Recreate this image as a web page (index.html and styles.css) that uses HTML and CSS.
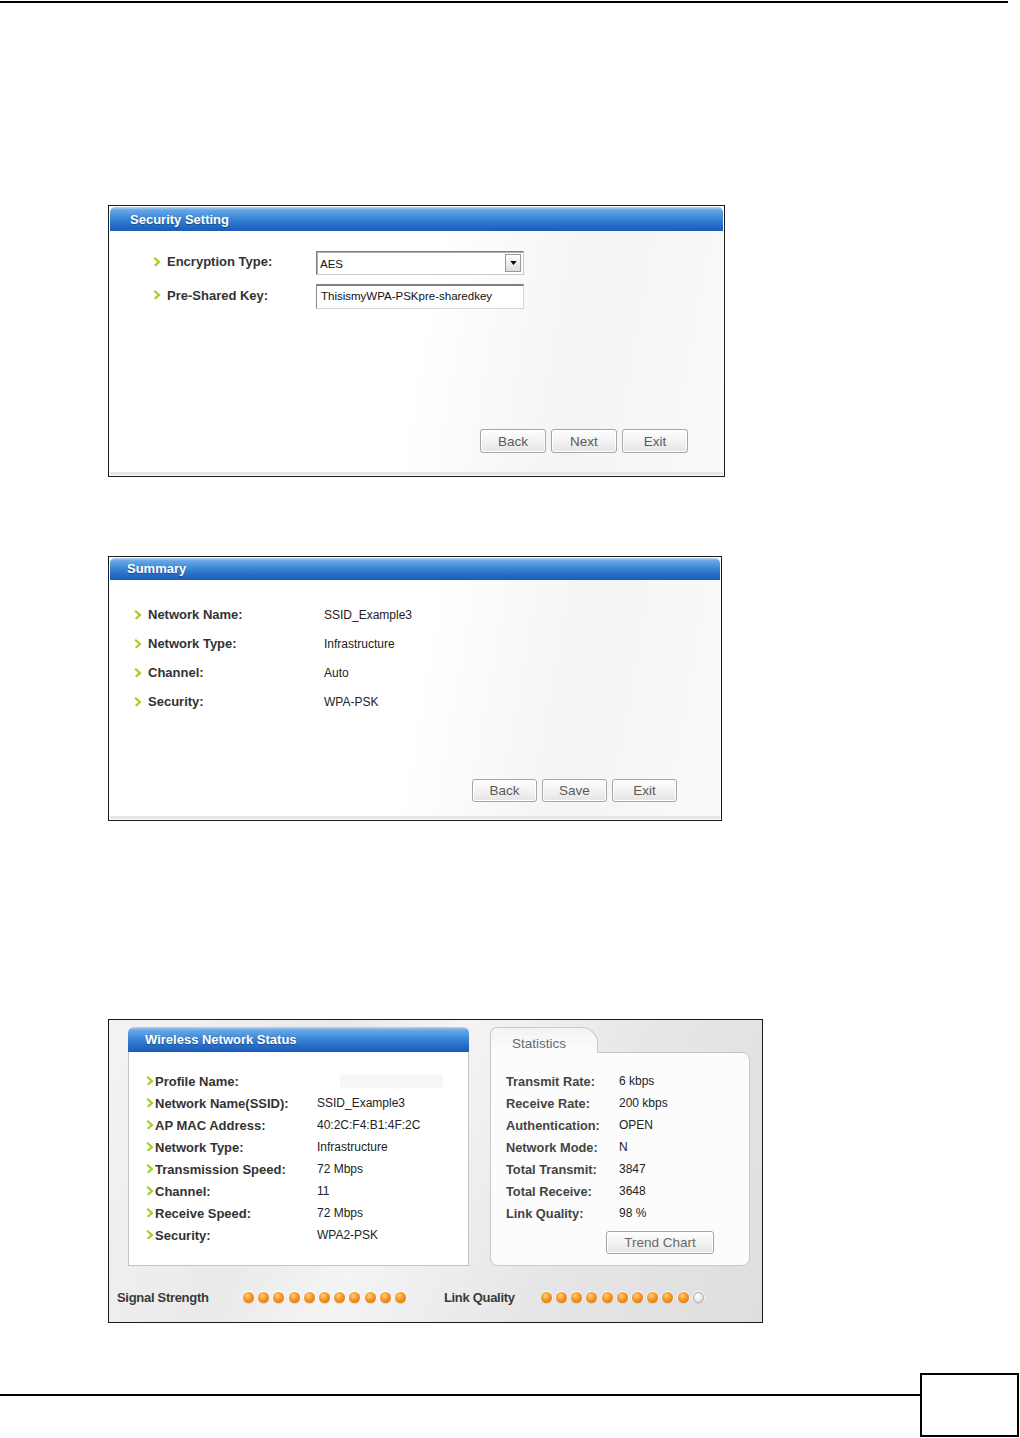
FILE: index.html
```html
<!DOCTYPE html>
<html>
<head>
<meta charset="utf-8">
<link rel="stylesheet" href="styles.css">
</head>
<body>
<div class="topline"></div>

<section class="panel panel-sec">
  <div class="ph">Security Setting</div>
  <div class="pb">
    <div class="form">
      <div class="frow">
        <span class="lbl"><svg class="chev" viewBox="0 0 8 10"><path d="M2 1.5 L6 5 L2 8.5" /></svg>Encryption Type:</span>
        <div class="select"><span class="sel-text">AES</span><span class="dd"><svg viewBox="0 0 8 5"><polygon points="0,0 8,0 4,5"/></svg></span></div>
      </div>
      <div class="frow">
        <span class="lbl"><svg class="chev" viewBox="0 0 8 10"><path d="M2 1.5 L6 5 L2 8.5" /></svg>Pre-Shared Key:</span>
        <div class="input">ThisismyWPA-PSKpre-sharedkey</div>
      </div>
    </div>
    <div class="btns">
      <span class="btn">Back</span><span class="btn">Next</span><span class="btn">Exit</span>
    </div>
  </div>
</section>

<section class="panel panel-sum">
  <div class="ph">Summary</div>
  <div class="pb">
    <div class="list">
      <div class="lrow"><span class="lbl"><svg class="chev" viewBox="0 0 8 10"><path d="M2 1.5 L6 5 L2 8.5" /></svg>Network Name:</span><span class="val">SSID_Example3</span></div>
      <div class="lrow"><span class="lbl"><svg class="chev" viewBox="0 0 8 10"><path d="M2 1.5 L6 5 L2 8.5" /></svg>Network Type:</span><span class="val">Infrastructure</span></div>
      <div class="lrow"><span class="lbl"><svg class="chev" viewBox="0 0 8 10"><path d="M2 1.5 L6 5 L2 8.5" /></svg>Channel:</span><span class="val">Auto</span></div>
      <div class="lrow"><span class="lbl"><svg class="chev" viewBox="0 0 8 10"><path d="M2 1.5 L6 5 L2 8.5" /></svg>Security:</span><span class="val">WPA-PSK</span></div>
    </div>
    <div class="btns">
      <span class="btn">Back</span><span class="btn">Save</span><span class="btn">Exit</span>
    </div>
  </div>
</section>

<section class="status">
  <div class="status-top">
    <div class="wbox">
      <div class="wh">Wireless Network Status</div>
      <div class="wb">
        <div class="srow"><span class="lbl"><svg class="chev" viewBox="0 0 8 10"><path d="M2 1.5 L6 5 L2 8.5" /></svg>Profile Name:</span><span class="val"><span class="blank"></span></span></div>
        <div class="srow"><span class="lbl"><svg class="chev" viewBox="0 0 8 10"><path d="M2 1.5 L6 5 L2 8.5" /></svg>Network Name(SSID):</span><span class="val">SSID_Example3</span></div>
        <div class="srow"><span class="lbl"><svg class="chev" viewBox="0 0 8 10"><path d="M2 1.5 L6 5 L2 8.5" /></svg>AP MAC Address:</span><span class="val">40:2C:F4:B1:4F:2C</span></div>
        <div class="srow"><span class="lbl"><svg class="chev" viewBox="0 0 8 10"><path d="M2 1.5 L6 5 L2 8.5" /></svg>Network Type:</span><span class="val">Infrastructure</span></div>
        <div class="srow"><span class="lbl"><svg class="chev" viewBox="0 0 8 10"><path d="M2 1.5 L6 5 L2 8.5" /></svg>Transmission Speed:</span><span class="val">72 Mbps</span></div>
        <div class="srow"><span class="lbl"><svg class="chev" viewBox="0 0 8 10"><path d="M2 1.5 L6 5 L2 8.5" /></svg>Channel:</span><span class="val">11</span></div>
        <div class="srow"><span class="lbl"><svg class="chev" viewBox="0 0 8 10"><path d="M2 1.5 L6 5 L2 8.5" /></svg>Receive Speed:</span><span class="val">72 Mbps</span></div>
        <div class="srow"><span class="lbl"><svg class="chev" viewBox="0 0 8 10"><path d="M2 1.5 L6 5 L2 8.5" /></svg>Security:</span><span class="val">WPA2-PSK</span></div>
      </div>
    </div>
    <div class="sbox">
      <div class="tab">Statistics</div>
      <div class="sb">
        <div class="trow"><span class="tl">Transmit Rate:</span><span class="val">6 kbps</span></div>
        <div class="trow"><span class="tl">Receive Rate:</span><span class="val">200 kbps</span></div>
        <div class="trow"><span class="tl">Authentication:</span><span class="val">OPEN</span></div>
        <div class="trow"><span class="tl">Network Mode:</span><span class="val">N</span></div>
        <div class="trow"><span class="tl">Total Transmit:</span><span class="val">3847</span></div>
        <div class="trow"><span class="tl">Total Receive:</span><span class="val">3648</span></div>
        <div class="trow"><span class="tl">Link Quality:</span><span class="val">98 %</span></div>
        <span class="btn btn-trend">Trend Chart</span>
      </div>
    </div>
  </div>
  <div class="meters">
    <span class="mlabel ml-sig">Signal Strength</span>
    <span class="dots"><i class="dot"></i><i class="dot"></i><i class="dot"></i><i class="dot"></i><i class="dot"></i><i class="dot"></i><i class="dot"></i><i class="dot"></i><i class="dot"></i><i class="dot"></i><i class="dot"></i></span>
    <span class="mlabel ml-link">Link Quality</span>
    <span class="dots"><i class="dot"></i><i class="dot"></i><i class="dot"></i><i class="dot"></i><i class="dot"></i><i class="dot"></i><i class="dot"></i><i class="dot"></i><i class="dot"></i><i class="dot"></i><i class="dot off"></i></span>
  </div>
</section>

<footer class="foot">
  <div class="foot-line"></div>
  <div class="foot-box"></div>
</footer>
</body>
</html>
```

FILE: styles.css
```css
html, body {
  margin: 0;
  padding: 0;
  background: #fff;
}
body {
  width: 1020px;
  height: 1438px;
  overflow: hidden;
  font-family: "Liberation Sans", Arial, sans-serif;
  color: #222;
}

.topline {
  margin-top: 1px;
  width: 1008px;
  height: 2px;
  background: #000;
}

/* ---------- wizard panels ---------- */
.panel {
  margin-left: 108px;
  box-sizing: border-box;
  border: 1px solid #1a1a1a;
  padding: 1px;
  display: flex;
  flex-direction: column;
  background: #fff;
}
.panel-sec {
  margin-top: 202px;
  width: 617px;
  height: 272px;
}
.panel-sum {
  margin-top: 79px;
  width: 614px;
  height: 265px;
}
.ph {
  flex: none;
  border-radius: 5px 5px 0 0;
  background: linear-gradient(to bottom, #b5d5f3 0%, #6aa8e6 12%, #3c88d8 45%, #2469c4 80%, #1b5db7 100%);
  color: #fff;
  font-weight: bold;
  font-size: 13px;
  text-shadow: 0 1px 1px rgba(0, 0, 0, 0.35);
  display: flex;
  align-items: center;
}
.panel-sec .ph { height: 24px; padding-left: 20px; }
.panel-sum .ph { height: 22px; padding-left: 17px; padding-bottom: 2px; box-sizing: border-box; }

.pb {
  flex: 1;
  display: flex;
  flex-direction: column;
  background: linear-gradient(100deg, #ffffff 0%, #ffffff 50%, #f4f4f4 75%, #fafafa 100%);
  border-bottom: 3px solid #e6e6e6;
}

.chev {
  width: 8px;
  height: 10px;
  flex: none;
  margin-right: 6px;
}
.chev path {
  fill: none;
  stroke: #a8cc28;
  stroke-width: 2.2;
  stroke-linecap: square;
  stroke-dasharray: 1.8 0.9;
}

.lbl {
  display: flex;
  align-items: center;
  font-weight: bold;
  font-size: 13px;
  color: #333;
}
.val {
  font-size: 12px;
  color: #222;
}

/* security form */
.form {
  padding: 20px 0 0 43px;
  display: flex;
  flex-direction: column;
  gap: 9px;
}
.frow {
  display: grid;
  grid-template-columns: 163px 208px;
  align-items: center;
}
.frow .lbl { margin-top: -3px; }
.select {
  box-sizing: border-box;
  height: 24px;
  border: 1px solid #7d7d7d;
  border-right-color: #c9c9c9;
  border-bottom-color: #c9c9c9;
  box-shadow: inset 1px 1px 0 #b0b0b0;
  display: flex;
  align-items: center;
  justify-content: space-between;
  padding: 2px 2px 2px 3px;
  background: #fff;
}
.sel-text {
  font-size: 11.5px;
  color: #111;
  padding-top: 2px;
}
.dd {
  width: 16px;
  height: 18px;
  box-sizing: border-box;
  border: 1px solid #9a9a9a;
  background: linear-gradient(#ffffff, #dcdcdc);
  display: flex;
  align-items: center;
  justify-content: center;
}
.dd svg {
  width: 7px;
  height: 4px;
  fill: #000;
}
.input {
  box-sizing: border-box;
  height: 25px;
  border: 1px solid #d6d6d6;
  border-top: 2px solid #808080;
  border-left: 1px solid #8a8a8a;
  padding: 4px 0 0 4px;
  font-size: 11.5px;
  color: #111;
  background: #fff;
}

/* summary list */
.list {
  padding: 20px 0 0 24px;
}
.lrow {
  display: grid;
  grid-template-columns: 190px 1fr;
  align-items: center;
  height: 29px;
}

/* buttons */
.btns {
  margin-top: auto;
  display: flex;
  justify-content: flex-end;
  gap: 5px;
}
.panel-sec .btns { padding: 0 35px 19px 0; }
.panel-sum .btns { padding: 0 43px 14px 0; }
.btn {
  box-sizing: border-box;
  display: flex;
  align-items: center;
  justify-content: center;
  border: 1px solid #a6a6a6;
  border-radius: 3px;
  background: linear-gradient(#fefefe, #f0f0f0 60%, #e4e4e4);
  box-shadow: inset 0 0 0 1px #fff;
  color: #5b5b5b;
  font-size: 13.5px;
}
.panel-sec .btn { width: 66px; height: 24px; }
.panel-sum .btn { width: 65px; height: 23px; }

/* ---------- status panel ---------- */
.status {
  margin: 198px 0 0 108px;
  box-sizing: border-box;
  width: 655px;
  height: 304px;
  border: 1px solid #1a1a1a;
  background: linear-gradient(115deg, #f3f3f3 0%, #eaeaea 30%, #f4f4f4 45%, #e6e6e6 70%, #dedede 100%);
  display: flex;
  flex-direction: column;
}
.status-top {
  display: flex;
  gap: 21px;
  padding: 7px 0 0 19px;
}
.wbox {
  width: 341px;
  height: 239px;
  box-sizing: border-box;
  display: flex;
  flex-direction: column;
}
.wh {
  height: 25px;
  flex: none;
  box-sizing: border-box;
  border-radius: 6px 6px 0 0;
  background: linear-gradient(to bottom, #b5d5f3 0%, #6aa8e6 12%, #3c88d8 45%, #2469c4 80%, #1b5db7 100%);
  color: #fff;
  font-weight: bold;
  font-size: 13px;
  text-shadow: 0 1px 1px rgba(0, 0, 0, 0.35);
  display: flex;
  align-items: center;
  padding-left: 17px;
}
.wb {
  flex: 1;
  border: 1px solid #c4c4c4;
  border-top: none;
  background: #fff;
  padding: 18px 0 0 17px;
}
.srow {
  display: grid;
  grid-template-columns: 171px 1fr;
  align-items: center;
  height: 22px;
}
.srow .chev { margin-right: 1px; }
.blank {
  display: inline-block;
  margin-left: 23px;
  width: 103px;
  height: 14px;
  background: #f7f7f7;
  vertical-align: middle;
}

.sbox {
  width: 260px;
  height: 239px;
  display: flex;
  flex-direction: column;
}
.tab {
  position: relative;
  z-index: 1;
  width: 108px;
  height: 26px;
  box-sizing: border-box;
  margin-bottom: -1px;
  border: 1px solid #c8c8c8;
  border-bottom: none;
  border-radius: 7px 16px 0 0;
  background: linear-gradient(#f3f3f3, #fdfdfd);
  color: #6a6a6a;
  font-size: 13.5px;
  padding: 8px 0 0 21px;
}
.sb {
  flex: 1;
  border: 1px solid #c8c8c8;
  border-radius: 0 8px 8px 8px;
  background: #fcfcfc;
  padding: 17px 0 0 15px;
}
.trow {
  display: grid;
  grid-template-columns: 113px 1fr;
  align-items: center;
  height: 22px;
}
.tl {
  font-weight: bold;
  font-size: 12.8px;
  color: #444;
}
.btn-trend {
  margin: 7px 0 0 100px;
  width: 108px;
  height: 23px;
  font-size: 13.5px;
  color: #6a6a6a;
}

.meters {
  margin-top: 21px;
  padding-left: 8px;
  display: flex;
  align-items: center;
  height: 20px;
}
.mlabel {
  font-weight: bold;
  font-size: 13px;
  letter-spacing: -0.3px;
  color: #3a3a3a;
}
.ml-sig { width: 126px; }
.ml-link { width: 97px; margin-left: 38px; }
.dots {
  display: flex;
  gap: 4.2px;
}
.dot {
  width: 11px;
  height: 11px;
  border-radius: 50%;
  background: radial-gradient(circle at 40% 35%, #ffd08a 0%, #f99a25 40%, #e07a08 80%, #c86a08 100%);
  box-shadow: 0 1px 1px rgba(0, 0, 0, 0.15), 0 0 0 1px rgba(255, 255, 255, 0.7);
}
.dot.off {
  box-sizing: border-box;
  border: 1.5px solid #a9a9a9;
  background: radial-gradient(circle at 40% 35%, #ffffff 0%, #e6e6e6 60%, #cfcfcf 100%);
}

/* ---------- footer ---------- */
.foot {
  margin-top: 50px;
  display: flex;
  align-items: flex-start;
}
.foot-line {
  margin-top: 21px;
  width: 920px;
  height: 2px;
  background: #000;
}
.foot-box {
  width: 99px;
  height: 64px;
  box-sizing: border-box;
  border: 2px solid #000;
}
```
